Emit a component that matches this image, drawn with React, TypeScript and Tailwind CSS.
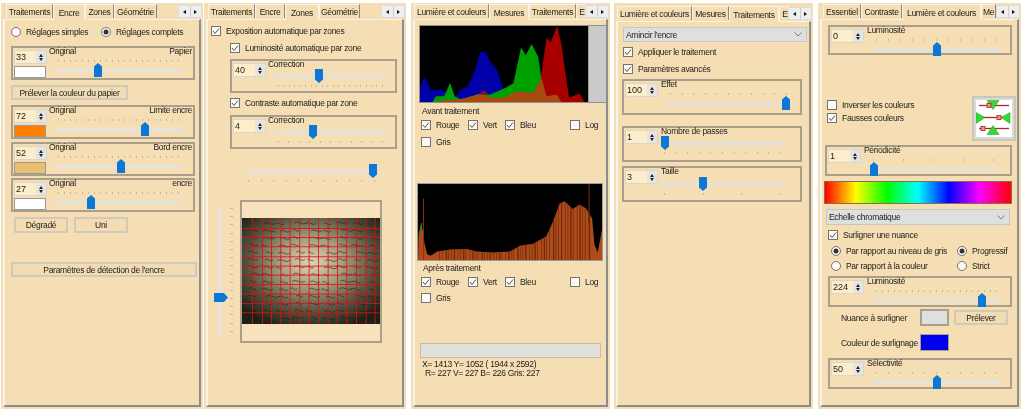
import React from "react";

function Check({ on = true, label, className = "" }: { on?: boolean; label: string; className?: string }) {
  return (
    <div className={`flex items-center h-[10px] gap-[5px] ${className}`}>
      <svg width="10" height="10" viewBox="0 0 10 10" className="shrink-0">
        <rect x="0.5" y="0.5" width="9" height="9" fill="#fbfaf6" stroke="#77736c" />
        {on && <path d="M2 5 L4 7.5 L8 2.5" fill="none" stroke="#555" strokeWidth="1" />}
      </svg>
      <span className="whitespace-nowrap">{label}</span>
    </div>
  );
}

function Radio({ on = false, label, className = "" }: { on?: boolean; label: string; className?: string }) {
  return (
    <div className={`flex items-center h-[10px] gap-[5px] ${className}`}>
      <svg width="10" height="10" viewBox="0 0 10 10" className="shrink-0">
        <circle cx="5" cy="5" r="4.5" fill="#fbfaf6" stroke="#77736c" />
        {on && <circle cx="5" cy="5" r="2.5" fill="#333" />}
      </svg>
      <span className="whitespace-nowrap">{label}</span>
    </div>
  );
}

function Spin({ value, className = "" }: { value: string; className?: string }) {
  return (
    <div className={`flex h-[14px] bg-[#d9d6d0] p-[1px] ${className}`}>
      <div className="flex-1 bg-[#fdeec9] pl-[1px] leading-[12px] text-[9px] tracking-normal">{value}</div>
      <div className="w-[10px] flex flex-col items-center justify-center gap-[1px] bg-[#e6e4e0]">
        <div className="w-0 h-0 border-x-[2px] border-x-transparent border-b-[3px] border-b-[#222]" />
        <div className="w-0 h-0 border-x-[2px] border-x-transparent border-t-[3px] border-t-[#222]" />
      </div>
    </div>
  );
}

function Slider({
  w,
  at,
  ticks,
  side,
  className = "",
}: {
  w: number;
  at: number;
  ticks: number;
  side: "top" | "bottom";
  className?: string;
}) {
  const list = Array.from({ length: ticks });
  return (
    <div className={`relative h-[14px] ${className}`} style={{ width: w }}>
      <div
        className={`absolute left-[3px] right-[3px] flex justify-between ${side === "top" ? "top-[-3px]" : "top-[16px]"}`}
      >
        {list.map((_, i) => (
          <div key={i} className="w-[1px] h-[2px] bg-[#c4b89f]" />
        ))}
      </div>
      <div className="absolute left-0 right-0 top-[6px] h-[3px] bg-[#e4e2dd]" />
      <svg
        width="8"
        height="14"
        viewBox="0 0 8 14"
        className="absolute top-0"
        style={{ left: at - 4 }}
      >
        <polygon
          points={side === "top" ? "4,0 8,3.5 8,14 0,14 0,3.5" : "0,0 8,0 8,10.5 4,14 0,10.5"}
          fill="#0a78d4"
        />
      </svg>
    </div>
  );
}

function Group({
  className = "",
  value,
  label,
  right,
  swatch,
  col = "w-[36px]",
  spinClass = "ml-[1px] w-[33px]",
  children,
}: {
  className?: string;
  value: string;
  label: string;
  right?: string;
  swatch?: string;
  col?: string;
  spinClass?: string;
  children: React.ReactNode;
}) {
  return (
    <div className={`flex border-2 border-[#ab9f8b] ${className}`}>
      <div className={`shrink-0 pt-[2px] ${col}`}>
        <Spin value={value} className={spinClass} />
        {swatch && <div className={`ml-[1px] mt-[2px] w-[32px] h-[12px] border border-[#999] ${swatch}`} />}
      </div>
      <div className="flex-1 min-w-0">
        <div className="flex justify-between h-[9px] -mt-[1px] pr-[1px] leading-[9px] whitespace-nowrap">
          <span>{label}</span>
          {right && <span>{right}</span>}
        </div>
        {children}
      </div>
    </div>
  );
}

function Btn({ label, className = "" }: { label: string; className?: string }) {
  return (
    <div
      className={`flex items-center justify-center border-2 border-[#cfcabd] bg-[#f3dcb2] whitespace-nowrap ${className}`}
    >
      {label}
    </div>
  );
}

function Combo({ label, className = "" }: { label: string; className?: string }) {
  return (
    <div className={`flex items-center justify-between bg-[#dfdfdf] border border-[#c6c6c6] px-[2px] ${className}`}>
      <span>{label}</span>
      <svg width="8" height="5" viewBox="0 0 8 5" className="mr-[2px]">
        <path d="M0.5 0.5 L4 4 L7.5 0.5" fill="none" stroke="#777" />
      </svg>
    </div>
  );
}

type Tab = { label: string; w: string; active?: boolean };

function Tabs({ tabs, className = "" }: { tabs: Tab[]; className?: string }) {
  return (
    <div className={`flex items-end relative shrink-0 ${className}`}>
      {tabs.map((t) =>
        t.active ? (
          <div
            key={t.label}
            className={`${t.w} h-[16px] -mb-[1px] z-10 bg-[#f5deb3] border-x border-t border-[#f7f3ea] flex items-center justify-center whitespace-nowrap overflow-hidden`}
          >
            {t.label}
          </div>
        ) : (
          <div
            key={t.label}
            className={`${t.w} h-[14px] bg-[#f5deb3] border-l border-t border-[#f7f3ea] border-r border-r-[#888] flex items-center justify-center whitespace-nowrap overflow-hidden mb-[1px]`}
          >
            {t.label}
          </div>
        ),
      )}
      <Scroller />
    </div>
  );
}

function Scroller() {
  return (
    <div className="absolute right-[-1px] bottom-[1px] z-20 flex gap-0 h-[13px] w-[24px] bg-[#eee] border border-[#ddd]">
      <div className="flex-1 flex items-center justify-center border-r border-[#ccc]">
        <div className="w-0 h-0 border-y-[2.5px] border-y-transparent border-r-[3px] border-r-[#111]" />
      </div>
      <div className="flex-1 flex items-center justify-center">
        <div className="w-0 h-0 border-y-[2.5px] border-y-transparent border-l-[3px] border-l-[#111]" />
      </div>
    </div>
  );
}

function Panel({
  className,
  tabs,
  tabsClass,
  children,
}: {
  className: string;
  tabs: Tab[];
  tabsClass: string;
  children: React.ReactNode;
}) {
  return (
    <div className={`shrink-0 flex flex-col mt-[3px] h-[406px] bg-[#f5deb3] px-[2px] pb-[2px] ${className}`}>
      <Tabs tabs={tabs} className={tabsClass} />
      <div className="flex-1 min-h-0 border-t border-l-2 border-t-[#f7f3ea] border-l-[#f7f3ea] border-r-2 border-b-2 border-r-[#8d8d8d] border-b-[#8d8d8d] overflow-hidden">
        {children}
      </div>
    </div>
  );
}

function Hist1() {
  const P = (pts: number[][]) => pts.map(([x, y]) => `${x - 27},${y - 75}`).join(" ");
  return (
    <div className="ml-[4px] mt-[5px] w-[188px] h-[78px] border border-[#8f8f8f]">
      <svg viewBox="0 0 563 233" width="186" height="76" preserveAspectRatio="none" className="block">
        <rect width="510" height="233" fill="#000" />
        <rect x="510" width="53" height="233" fill="#cbcbcb" />
        <polygon
          fill="#0000a8"
          points={P([[27,308],[27,265],[40,230],[50,250],[60,272],[90,270],[105,280],[130,300],[150,270],[170,262],[190,220],[210,155],[225,155],[240,185],[260,210],[280,270],[300,290],[320,300],[340,308]])}
        />
        <polygon
          fill="#00a000"
          points={P([[65,308],[75,290],[100,290],[118,250],[132,290],[150,300],[200,285],[240,285],[285,265],[310,250],[333,140],[347,165],[365,130],[385,170],[395,240],[385,270],[370,290],[350,308]])}
        />
        <polygon
          fill="#a80000"
          points={P([[385,308],[392,240],[410,110],[422,125],[442,75],[455,130],[470,240],[478,295],[510,282],[525,308]])}
        />
        <polygon
          fill="#a84a12"
          points={P([[70,308],[100,303],[130,302],[170,295],[210,282],[240,295],[280,295],[320,275],[370,280],[395,235],[410,290],[440,285],[455,308]])}
        />
        <polygon fill="#8a1030" points={P([[205,285],[220,272],[235,285]])} />
      </svg>
    </div>
  );
}

function Hist2() {
  const pts = [
    [22,258],[24,180],[30,150],[36,165],[42,210],[50,240],[60,245],[80,232],[120,226],[170,224],[200,232],[250,235],[300,232],[330,214],[370,208],[410,185],[430,140],[450,85],[465,78],[490,102],[510,88],[530,100],[548,130],[555,210],[565,235],[578,165],[578,258],
  ].map(([x, y]) => `${x - 22},${y - 25}`).join(" ");
  const bars = Array.from({ length: 62 }, (_, i) => i * 9 + ((i * 7) % 4));
  return (
    <div className="ml-[2px] mt-[36px] w-[186px] h-[78px] border border-[#9a9a9a]">
      <svg viewBox="0 0 556 233" width="184" height="76" preserveAspectRatio="none" className="block">
        <defs>
          <clipPath id="h2clip">
            <polygon points={pts} />
          </clipPath>
        </defs>
        <rect width="556" height="233" fill="#000" />
        <polygon points={pts} fill="#b04a1a" />
        <g clipPath="url(#h2clip)">
          {bars.map((x, i) => (
            <rect key={i} x={x} y="0" width={i % 3 === 0 ? 4 : 2} height="233" fill="#6b2c0c" opacity={x > 60 && x < 520 ? 1 : 0} />
          ))}
        </g>
        <rect x="15" y="45" width="3" height="190" fill="#8a3414" />
        <rect x="9" y="120" width="3" height="40" fill="#1f8f3a" />
        <rect x="515" y="0" width="4" height="120" fill="#5c2408" />
      </svg>
    </div>
  );
}

function Photo() {
  const vs = [135,165,192,220,248,277,305,333,362,390,418,447,476,503].map((v) => (v - 105) / 3);
  const hs = [115,142,170,200,228,255,283,312,340,368].map((v) => (v - 85) / 3);
  const rows = Array.from({ length: 14 }, (_, i) => 5 + i * 7.3);
  return (
    <svg width="138" height="106" viewBox="0 0 138 106" className="block">
      <defs>
        <radialGradient id="vig" cx="50%" cy="42%" r="66%">
          <stop offset="0%" stopColor="#e3d4b6" />
          <stop offset="35%" stopColor="#a89c7e" />
          <stop offset="70%" stopColor="#56523f" />
          <stop offset="100%" stopColor="#1e1f18" />
        </radialGradient>
      </defs>
      <rect width="138" height="106" fill="url(#vig)" />
      {rows.map((y, r) =>
        Array.from({ length: 9 }, (_, j) => {
          const x = 4 + j * 15 + ((r * 5 + j * 3) % 6);
          const l = 6 + ((r + j * 5) % 8);
          const d = ((r * 3 + j * 7) % 3) * 0.5;
          return (
            <path
              key={`${r}-${j}`}
              d={`M${x} ${y + d} q${l / 4} -2 ${l / 2} 0 t${l / 2} 0`}
              fill="none"
              stroke="#1d1a15"
              strokeWidth="0.8"
              opacity="0.7"
            />
          );
        }),
      )}
      {vs.map((x) => (
        <rect key={x} x={x} y="0" width="0.9" height="106" fill="#e01010" opacity={0.9} />
      ))}
      {hs.map((y) => (
        <rect key={y} x="0" y={y} width="138" height="0.9" fill="#e01010" opacity={0.9} />
      ))}
    </svg>
  );
}

function FalseColorIcon() {
  return (
    <div className="w-[44px] h-[45px] border-2 border-[#c9c6be] bg-[#dcdad5] p-[2px] shrink-0">
      <svg viewBox="0 0 36 36" width="36" height="37" className="block bg-white">
        <g stroke="#a82828" strokeWidth="1.3">
          <line x1="3" y1="5" x2="33" y2="5" />
          <line x1="3" y1="17" x2="33" y2="17" />
          <line x1="3" y1="28" x2="33" y2="28" />
        </g>
        <g fill="#39d639" stroke="#1f9a1f" strokeWidth="0.5">
          <polygon points="11,0 23,0 17,9" />
          <polygon points="0,12 0,23 9,17" />
          <polygon points="34,12 34,23 25,17" />
          <polygon points="17,25 11,34 23,34" />
        </g>
        <g fill="#e89a70" stroke="#b03030" strokeWidth="0.9">
          <rect x="11" y="3" width="4" height="4" />
          <rect x="21" y="15" width="4" height="4" />
          <rect x="5" y="26" width="4" height="4" />
        </g>
      </svg>
    </div>
  );
}

export default function App() {
  return (
    <div className="flex w-[1024px] h-[410px] overflow-hidden bg-white text-[#222] text-[8.5px] leading-[10px] tracking-[-0.3px] blur-[0.4px] font-['Liberation_Sans',sans-serif]">
      {/* Panel 1 */}
      <Panel
        className="w-[202px] ml-[1px]"
        tabsClass="h-[16px] pl-[3px]"
        tabs={[
          { label: "Traitements", w: "w-[47px]" },
          { label: "Encre", w: "w-[32px]", active: true },
          { label: "Zones", w: "w-[29px]" },
          { label: "Géométrie", w: "w-[43px]" },
        ]}
      >
        <div className="flex mt-[7px] ml-[6px]">
          <Radio label="Réglages simples" className="w-[90px]" />
          <Radio on label="Réglages complets" />
        </div>
        <Group className="ml-[6px] mt-[9px] w-[184px] h-[34px]" value="33" label="Original" right="Papier" swatch="bg-white">
          <Slider w={127} at={43} ticks={21} side="top" className="ml-[6px] mt-[7px]" />
        </Group>
        <Btn label="Prélever la couleur du papier" className="ml-[6px] mt-[5px] w-[117px] h-[15px]" />
        <Group className="ml-[6px] mt-[5px] w-[184px] h-[34px]" value="72" label="Original" right="Limite encre" swatch="bg-[#ff8000]">
          <Slider w={127} at={90} ticks={21} side="top" className="ml-[6px] mt-[7px]" />
        </Group>
        <Group className="ml-[6px] mt-[3px] w-[184px] h-[34px]" value="52" label="Original" right="Bord encre" swatch="bg-[#e8c070]">
          <Slider w={127} at={66} ticks={21} side="top" className="ml-[6px] mt-[7px]" />
        </Group>
        <Group className="ml-[6px] mt-[2px] w-[184px] h-[34px]" value="27" label="Original" right="encre" swatch="bg-white">
          <Slider w={127} at={36} ticks={21} side="top" className="ml-[6px] mt-[7px]" />
        </Group>
        <div className="flex ml-[9px] mt-[5px] gap-[6px]">
          <Btn label="Dégradé" className="w-[54px] h-[16px]" />
          <Btn label="Uni" className="w-[54px] h-[16px]" />
        </div>
        <Btn label="Paramètres de détection de l'encre" className="ml-[6px] mt-[29px] w-[186px] h-[15px]" />
      </Panel>

      {/* Panel 2 */}
      <Panel
        className="w-[202px] ml-[1px]"
        tabsClass="h-[16px] pl-[2px]"
        tabs={[
          { label: "Traitements", w: "w-[47px]" },
          { label: "Encre", w: "w-[30px]" },
          { label: "Zones", w: "w-[34px]", active: true },
          { label: "Géométrie", w: "w-[41px]" },
        ]}
      >
        <Check label="Exposition automatique par zones" className="ml-[3px] mt-[6px]" />
        <Check label="Luminosité automatique par zone" className="ml-[22px] mt-[7px]" />
        <Group className="ml-[22px] mt-[6px] w-[167px] h-[34px]" value="40" label="Correction">
          <Slider w={111} at={44} ticks={20} side="bottom" className="ml-[7px]" />
        </Group>
        <Check label="Contraste automatique par zone" className="ml-[22px] mt-[5px]" />
        <Group className="ml-[22px] mt-[7px] w-[167px] h-[34px]" value="4" label="Correction">
          <Slider w={111} at={38} ticks={11} side="bottom" className="ml-[7px]" />
        </Group>
        <Slider w={133} at={128} ticks={11} side="bottom" className="ml-[37px] mt-[15px]" />
        <div className="flex mt-[22px]">
          <div className="relative ml-[10px] w-[22px] h-[143px] shrink-0">
            <div className="ml-0 mt-[6px] w-[3px] h-[131px] bg-[#e4e2dd]" />
            <div className="absolute left-[12px] top-[8px] h-[124px] flex flex-col justify-between">
              {Array.from({ length: 16 }).map((_, i) => (
                <div key={i} className="w-[3px] h-[1px] bg-[#c4b79f]" />
              ))}
            </div>
            <svg width="14" height="9" viewBox="0 0 14 9" className="absolute left-[-4px] top-[93px]">
              <polygon points="0,0 10,0 14,4.5 10,9 0,9" fill="#0a78d4" />
            </svg>
          </div>
          <div className="w-[142px] h-[143px] border-2 border-[#ab9f8b] bg-[#f7e2bb] pt-[16px]">
            <Photo />
          </div>
        </div>
      </Panel>

      {/* Panel 3 */}
      <Panel
        className="w-[199px] ml-[5px]"
        tabsClass="h-[16px] pl-[1px]"
        tabs={[
          { label: "Lumière et couleurs", w: "w-[75px]" },
          { label: "Mesures", w: "w-[40px]", active: true },
          { label: "Traitements", w: "w-[47px]" },
          { label: "E", w: "w-[12px]" },
        ]}
      >
        <Hist1 />
        <div className="ml-[7px] mt-[3px] h-[10px]">Avant traitement</div>
        <div className="flex ml-[6px] mt-[4px]">
          <Check label="Rouge" className="w-[47px]" />
          <Check label="Vert" className="w-[37px]" />
          <Check label="Bleu" className="w-[65px]" />
          <Check on={false} label="Log" />
        </div>
        <Check on={false} label="Gris" className="ml-[6px] mt-[7px]" />
        <Hist2 />
        <div className="ml-[8px] mt-[2px] h-[10px]">Après traitement</div>
        <div className="flex ml-[6px] mt-[4px]">
          <Check label="Rouge" className="w-[47px]" />
          <Check label="Vert" className="w-[37px]" />
          <Check label="Bleu" className="w-[65px]" />
          <Check on={false} label="Log" />
        </div>
        <Check on={false} label="Gris" className="ml-[6px] mt-[6px]" />
        <div className="ml-[5px] mt-[40px] w-[181px] h-[15px] bg-[#e2e0da] border border-[#c2bcae]" />
        <div className="ml-[7px] mt-[2px] leading-[9px]">X= 1413 Y= 1052 ( 1944 x 2592)</div>
        <div className="ml-[10px] leading-[9px]">R= 227 V= 227 B= 226 Gris: 227</div>
      </Panel>

      {/* Panel 4 */}
      <Panel
        className="w-[199px] ml-[4px]"
        tabsClass="h-[18px] pl-[1px]"
        tabs={[
          { label: "Lumière et couleurs", w: "w-[75px]" },
          { label: "Mesures", w: "w-[37px]" },
          { label: "Traitements", w: "w-[50px]", active: true },
          { label: "E", w: "w-[12px]" },
        ]}
      >
        <Combo label="Amincir l'encre" className="ml-[5px] mt-[5px] w-[184px] h-[15px]" />
        <Check label="Appliquer le traitement" className="ml-[5px] mt-[5px]" />
        <Check label="Paramètres avancés" className="ml-[5px] mt-[7px]" />
        <Group className="ml-[4px] mt-[5px] w-[180px] h-[36px]" value="100" label="Effet" col="w-[37px]">
          <Slider w={123} at={119} ticks={11} side="top" className="ml-[6px] mt-[7px]" />
        </Group>
        <Group className="ml-[4px] mt-[11px] w-[180px] h-[36px]" value="1" label="Nombre de passes" col="w-[37px]">
          <Slider w={123} at={4} ticks={11} side="bottom" />
        </Group>
        <Group className="ml-[4px] mt-[4px] w-[180px] h-[36px]" value="3" label="Taille" col="w-[37px]">
          <Slider w={123} at={42} ticks={4} side="bottom" className="mt-[1px]" />
        </Group>
      </Panel>

      {/* Panel 5 */}
      <Panel
        className="w-[203px] ml-[5px]"
        tabsClass="h-[16px] pl-[3px]"
        tabs={[
          { label: "Essentiel", w: "w-[38px]" },
          { label: "Contraste", w: "w-[41px]" },
          { label: "Lumière et couleurs", w: "w-[79px]", active: true },
          { label: "Me", w: "w-[15px]" },
        ]}
      >
        <Group className="ml-[6px] mt-[5px] w-[184px] h-[30px]" value="0" label="Luminosité" col="w-[37px]">
          <Slider w={127} at={64} ticks={11} side="top" className="ml-[6px] mt-[7px]" />
        </Group>
        <div className="flex mt-[41px] h-[45px]">
          <div className="w-[145px] ml-[5px] pt-[4px]">
            <Check on={false} label="Inverser les couleurs" />
            <Check label="Fausses couleurs" className="mt-[3px]" />
          </div>
          <FalseColorIcon />
        </div>
        <Group className="ml-[3px] mt-[4px] w-[187px] h-[31px]" value="1" label="Périodicité" col="w-[37px]">
          <Slider w={127} at={4} ticks={5} side="top" className="ml-[6px] mt-[7px]" />
        </Group>
        <div className="ml-[2px] mt-[5px] w-[188px] h-[23px] border border-[#8a6a50] bg-[linear-gradient(to_right,#ff0000,#ffff00,#00ff00,#00ffff,#0000ff,#ff00ff,#ff0000)]" />
        <Combo label="Echelle chromatique" className="ml-[4px] mt-[5px] w-[184px] h-[16px]" />
        <Check label="Surligner une nuance" className="ml-[6px] mt-[5px]" />
        <div className="flex ml-[9px] mt-[6px]">
          <Radio on label="Par rapport au niveau de gris" className="w-[126px]" />
          <Radio on label="Progressif" />
        </div>
        <div className="flex ml-[9px] mt-[5px]">
          <Radio label="Par rapport à la couleur" className="w-[126px]" />
          <Radio label="Strict" />
        </div>
        <Group className="ml-[6px] mt-[5px] w-[184px] h-[31px]" value="224" label="Luminosité" col="w-[37px]">
          <Slider w={127} at={109} ticks={21} side="top" className="ml-[6px] mt-[7px]" />
        </Group>
        <div className="flex items-center ml-[19px] mt-[2px] h-[17px]">
          <span className="w-[79px] whitespace-nowrap">Nuance à surligner</span>
          <div className="w-[29px] h-[17px] bg-[#dfdfdf] border-2 border-[#ab9f8b]" />
          <Btn label="Prélever" className="ml-[5px] w-[54px] h-[15px]" />
        </div>
        <div className="flex items-center ml-[19px] mt-[8px] h-[17px]">
          <span className="w-[79px] whitespace-nowrap">Couleur de surlignage</span>
          <div className="w-[29px] h-[17px] bg-[#0000f0] border border-[#ab9f8b]" />
        </div>
        <Group className="ml-[6px] mt-[7px] w-[184px] h-[31px]" value="50" label="Sélectivité" col="w-[37px]">
          <Slider w={127} at={64} ticks={11} side="top" className="ml-[6px] mt-[7px]" />
        </Group>
      </Panel>
    </div>
  );
}
